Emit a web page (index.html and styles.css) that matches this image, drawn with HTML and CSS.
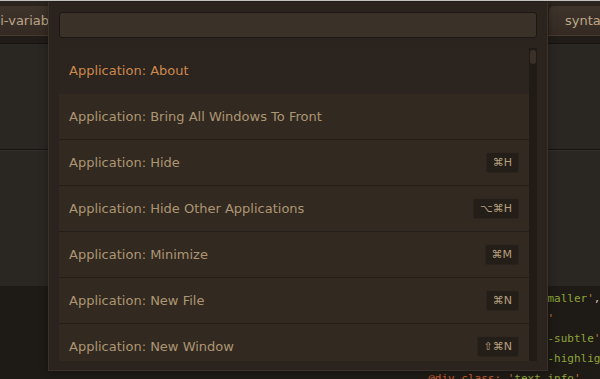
FILE: index.html
```html
<!DOCTYPE html>
<html lang="en">

<head>
  <meta charset="UTF-8">
  <title>Command Palette</title>
  <link rel="stylesheet" href="styles.css">
</head>

<body>
  <div class="workspace">
    <div class="tab-bar">
      <div class="tab tab-first">ui-variables.less</div>
      <div class="tab tab-last">syntax_variables.less</div>
    </div>
    <div class="tab-strip"></div>

    <div class="pane pane-top"></div>
    <div class="pane pane-middle"></div>

    <pre class="code"><span class="line">                                                              <span class="kw">@div class: </span><span class="q">'</span><span class="str">text-smaller</span><span class="q">'</span>,</span>
<span class="line">                                                               <span class="kw">@span class: </span><span class="q">'</span><span class="str">icon</span><span class="q">'</span></span>
<span class="line">                                                                <span class="kw">@div class: </span><span class="q">'</span><span class="str">text-subtle</span><span class="q">'</span></span>
<span class="line">                                                                <span class="kw">@div class: </span><span class="q">'</span><span class="str">text-highlight</span><span class="q">'</span></span>
<span class="line">                                                               <span class="kw">@div class: </span><span class="q">'</span><span class="str">text-info</span><span class="q">'</span></span></pre>
  </div>

  <!-- command palette overlay -->
  <div class="palette">
    <div class="palette-input"></div>
    <div class="palette-list">
      <ul class="items">
        <li class="item selected"><span>Application: About</span></li>
        <li class="item"><span>Application: Bring All Windows To Front</span></li>
        <li class="item"><span>Application: Hide</span><kbd>⌘H</kbd></li>
        <li class="item"><span>Application: Hide Other Applications</span><kbd>⌥⌘H</kbd></li>
        <li class="item"><span>Application: Minimize</span><kbd>⌘M</kbd></li>
        <li class="item"><span>Application: New File</span><kbd>⌘N</kbd></li>
        <li class="item"><span>Application: New Window</span><kbd>⇧⌘N</kbd></li>
        <li class="item"><span>Application: Open</span><kbd>⌘O</kbd></li>
      </ul>
      <div class="scrollbar">
        <div class="scroll-thumb"></div>
      </div>
    </div>
  </div>
</body>

</html>
```

FILE: styles.css
```css
* {
  margin: 0;
  padding: 0;
  box-sizing: border-box;
}

body {
  width: 600px;
  height: 379px;
  overflow: hidden;
  background: #2a2723;
  font-family: 'DejaVu Sans', 'Lucida Grande', sans-serif;
  font-size: 13px;
  position: relative;
  border-top: 1px solid #c4c2bf;
}

.workspace {
  display: flex;
  flex-direction: column;
  height: 378px;
}

/* tabs */

.tab-bar {
  height: 35px;
  background: #2a231e;
  display: flex;
  justify-content: space-between;
  align-items: flex-end;
  overflow: hidden;
  border-bottom: 1px solid #473a2f;
}

.tab {
  height: 29px;
  line-height: 29px;
  padding: 0 16px;
  color: #bda688;
  background: linear-gradient(#3e342b, #342a23);
  border-radius: 5px 5px 0 0;
  white-space: nowrap;
  flex-shrink: 0;
}

.tab-first {
  width: 200px;
  margin-left: -20px;
  padding-left: 12px;
}

.tab-last {
  width: 170px;
  margin-right: -119px;
}

.tab-strip {
  height: 8px;
  background: #211c18;
  border-bottom: 1px solid #15120f;
}

/* editor panes */

.pane {
  background: #2a2723;
}

.pane-top {
  height: 106px;
  border-bottom: 1px solid #171411;
}

.pane-middle {
  height: 136px;
  border-top: 1px solid #34302b;
}

.code {
  flex: 1;
  background: #1e1a16;
  font-family: 'DejaVu Sans Mono', monospace;
  font-size: 11px;
  line-height: 20px;
  padding: 3px 0 0 11px;
  color: #c9c2b6;
  overflow: hidden;
}

.code .kw {
  color: #c85a2e;
}

.code .q {
  color: #c97a3c;
}

.code .str {
  color: #8ea538;
}

/* command palette */

.palette {
  position: absolute;
  top: 1px;
  left: 48px;
  width: 500px;
  height: 369px;
  background: #2b231d;
  border: 1px solid #3a3129;
  border-top: none;
  padding: 10px 10px 9px;
  box-shadow: 0 0 8px rgba(0, 0, 0, 0.35);
  display: flex;
  flex-direction: column;
  gap: 10px;
}

.palette-input {
  height: 26px;
  background: #3a3128;
  border: 1px solid #1c1713;
  border-radius: 3px;
}

.palette-list {
  height: 313px;
  display: flex;
  overflow: hidden;
}

.items {
  list-style: none;
  flex: 1;
  overflow: hidden;
}

.item {
  height: 46px;
  padding: 0 10px;
  display: flex;
  align-items: center;
  justify-content: space-between;
  background: #322920;
  border-bottom: 1px solid #241e19;
  color: #ad9674;
}

.item.selected {
  background: #2c241e;
  border-bottom-color: #2c241e;
  color: #cb894f;
}

kbd {
  font-family: 'DejaVu Sans', sans-serif;
  font-size: 11px;
  line-height: 19px;
  padding: 0 6px;
  color: #b59e7c;
  background: #241e19;
  border: 1px solid #2b241e;
  border-top-color: #302820;
  border-radius: 3px;
}

.scrollbar {
  width: 8px;
  background: #211b17;
  padding: 2px 1px;
}

.scroll-thumb {
  height: 14px;
  background: #3b3129;
  border-radius: 3px;
}
```
